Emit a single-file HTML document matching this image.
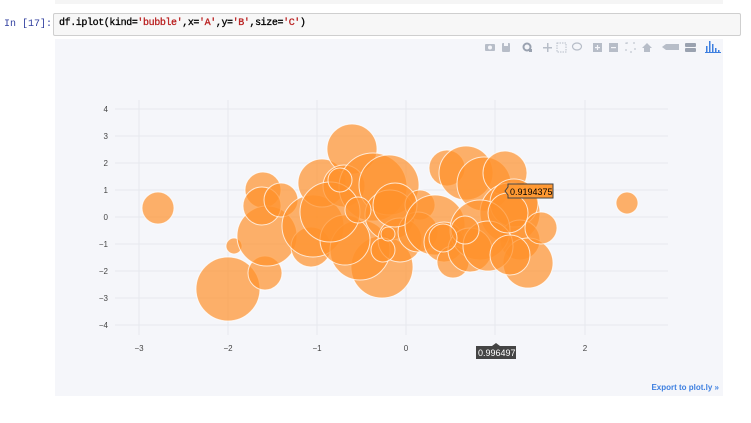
<!DOCTYPE html>
<html><head><meta charset="utf-8"><style>
body{margin:0;width:751px;height:423px;background:#fff;overflow:hidden;position:relative;font-family:"Liberation Sans",sans-serif}
.stripe{position:absolute;left:55px;top:0;width:668px;height:4px;background:#f5f5f5}
.prompt{position:absolute;left:4px;top:19px;font:10px "Liberation Mono",monospace;color:#303f9f}
.cell{position:absolute;left:53px;top:13px;width:686px;height:21px;border:1px solid #cfcfcf;background:#f7f7f7;border-radius:2px}
.code{position:absolute;left:5px;top:4px;font:10px "Liberation Mono",monospace;color:#000;letter-spacing:-0.4px;-webkit-text-stroke:0.3px #000}
.s{color:#ba2121;-webkit-text-stroke:0.3px #ba2121}
.plot{position:absolute;left:55px;top:39px;width:668px;height:357px;background:#f5f6fa}
</style></head><body>
<div class="stripe"></div>
<div class="prompt">In [17]:</div>
<div class="cell"><div class="code">df.iplot(kind=<span class="s">'bubble'</span>,x=<span class="s">'A'</span>,y=<span class="s">'B'</span>,size=<span class="s">'C'</span>)</div></div>
<div class="plot"></div>
<svg width="751" height="423" style="position:absolute;left:0;top:0" font-family="Liberation Sans, sans-serif">
<g stroke="#e6e8ee" stroke-width="1">
<line x1="139" y1="100" x2="139" y2="335"/><line x1="228" y1="100" x2="228" y2="335"/><line x1="317" y1="100" x2="317" y2="335"/><line x1="406" y1="100" x2="406" y2="335"/><line x1="495" y1="100" x2="495" y2="335"/><line x1="585" y1="100" x2="585" y2="335"/>
<line x1="115" y1="109" x2="668" y2="109"/><line x1="115" y1="136" x2="668" y2="136"/><line x1="115" y1="163" x2="668" y2="163"/><line x1="115" y1="190" x2="668" y2="190"/><line x1="115" y1="217" x2="668" y2="217"/><line x1="115" y1="244" x2="668" y2="244"/><line x1="115" y1="271" x2="668" y2="271"/><line x1="115" y1="298" x2="668" y2="298"/><line x1="115" y1="325" x2="668" y2="325"/>
</g>
<g font-size="8" fill="#444" text-anchor="end">
<text x="108" y="112">4</text><text x="108" y="139">3</text><text x="108" y="166">2</text><text x="108" y="193">1</text><text x="108" y="220">0</text><text x="108" y="247">−1</text><text x="108" y="274">−2</text><text x="108" y="301">−3</text><text x="108" y="328">−4</text>
</g>
<g font-size="8" fill="#444" text-anchor="middle">
<text x="139" y="351">−3</text><text x="228" y="351">−2</text><text x="317" y="351">−1</text><text x="406" y="351">0</text><text x="585" y="351">2</text>
</g>
<g fill="#ff922b" fill-opacity="0.7" stroke="#fff" stroke-opacity="0.75" stroke-width="1">
<circle cx="158" cy="208" r="16"/><circle cx="627" cy="203" r="11"/><circle cx="228" cy="289" r="32"/><circle cx="234" cy="246" r="8"/>
<circle cx="263" cy="190" r="18"/><circle cx="265" cy="273" r="17"/><circle cx="267" cy="236" r="30"/><circle cx="262" cy="206" r="19"/><circle cx="281" cy="200" r="17"/>
<circle cx="311" cy="247" r="20"/><circle cx="313" cy="226" r="31"/><circle cx="322" cy="183" r="24"/><circle cx="352" cy="149" r="25"/><circle cx="344" cy="186" r="21"/>
<circle cx="373" cy="187" r="34"/><circle cx="382" cy="267" r="31"/><circle cx="360" cy="250" r="30"/><circle cx="345" cy="240" r="25"/><circle cx="330" cy="212" r="30"/>
<circle cx="389" cy="185" r="30"/><circle cx="390" cy="215" r="25"/><circle cx="400" cy="240" r="22"/><circle cx="383" cy="250" r="12"/><circle cx="388" cy="234" r="7"/>
<circle cx="420" cy="205" r="15"/><circle cx="418" cy="232" r="20"/><circle cx="395" cy="205" r="22"/><circle cx="358" cy="210" r="13"/><circle cx="340" cy="180" r="12"/>
<circle cx="435" cy="225" r="30"/><circle cx="444" cy="242" r="20"/><circle cx="453" cy="262" r="16"/><circle cx="447" cy="168" r="18"/><circle cx="466" cy="173" r="27"/>
<circle cx="484" cy="184" r="27"/><circle cx="505" cy="173" r="22"/><circle cx="510" cy="213" r="30"/><circle cx="514" cy="203" r="24"/><circle cx="520" cy="240" r="20"/>
<circle cx="528" cy="263" r="25"/><circle cx="541" cy="228" r="16"/><circle cx="480" cy="230" r="30"/><circle cx="470" cy="250" r="22"/><circle cx="488" cy="246" r="25"/>
<circle cx="510" cy="255" r="20"/><circle cx="465" cy="230" r="14"/><circle cx="508" cy="213" r="20"/><circle cx="443" cy="238" r="14"/>
</g>
<path d="M505 191 L508 187 L508 184 L553 184 L553 198 L508 198 L508 195 Z" fill="#ff9933" stroke="#444" stroke-width="1"/>
<text x="510" y="195" font-size="9" fill="#000">0.9194375</text>
<path d="M496 343 L500 346 L516 346 L516 359 L476 359 L476 346 L492 346 Z" fill="#444"/>
<text x="478" y="356" font-size="9" fill="#fff">0.996497</text>
<text x="719" y="390" font-size="8" font-weight="bold" fill="#3d7fe0" text-anchor="end">Export to plot.ly »</text>
<g fill="#b7bdc8">
<rect x="485" y="44" width="10" height="7" rx="1"/><circle cx="490" cy="47.5" r="2" fill="#f5f6fa"/>
<rect x="502" y="43" width="8" height="9" rx="1"/><rect x="504" y="43" width="4" height="3" fill="#f5f6fa"/>
<circle cx="527" cy="47" r="3.5" fill="none" stroke="#9aa2b0" stroke-width="2"/><rect x="529" y="49" width="3" height="3" fill="#9aa2b0"/>
<rect x="543" y="47" width="9" height="1.5"/><rect x="547" y="43" width="1.5" height="9"/>
<rect x="557" y="43" width="9" height="9" fill="none" stroke="#b7bdc8" stroke-dasharray="1.5 1"/>
<ellipse cx="577" cy="46.5" rx="4.5" ry="3.5" fill="none" stroke="#b7bdc8" stroke-width="1.2"/>
<rect x="593" y="43" width="9" height="9"/><rect x="595" y="47" width="5" height="1.2" fill="#f5f6fa"/><rect x="596.9" y="45" width="1.2" height="5" fill="#f5f6fa"/>
<rect x="609" y="43" width="9" height="9"/><rect x="611" y="47" width="5" height="1.2" fill="#f5f6fa"/>
<rect x="626" y="43" width="9" height="9" fill="none" stroke="#b7bdc8" stroke-dasharray="2 5"/>
<path d="M642 48 L647 43 L652 48 L650 48 L650 52 L644 52 L644 48Z"/>
<path d="M662 47 L666 44 L679 44 L679 50 L666 50Z"/>
<rect x="685" y="43" width="11" height="4" rx="1" fill="#9aa2b0"/><rect x="685" y="48" width="11" height="4" rx="1" fill="#9aa2b0"/>
</g>
<g fill="#3d7fe0"><rect x="706" y="46" width="1.5" height="6"/><rect x="709" y="41" width="1.5" height="11"/><rect x="712" y="44" width="1.5" height="8"/><rect x="715" y="48" width="1.5" height="4"/><rect x="718" y="50" width="1.5" height="2"/><rect x="705" y="52" width="16" height="1"/></g>
</svg>
</body></html>
